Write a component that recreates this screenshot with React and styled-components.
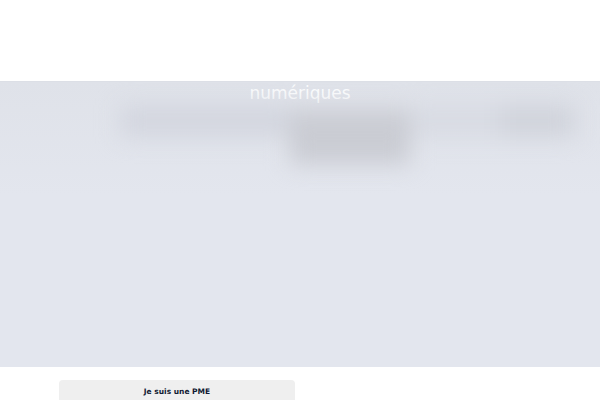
import styled, { createGlobalStyle } from "styled-components";

const Global = createGlobalStyle`
  body {
    margin: 0;
    background: #ffffff;
    font-family: "DejaVu Sans", "Noto Sans", sans-serif;
    overflow: hidden;
  }
`;

const App = () => {
    return (
        <Page>
            <Global />
            <Header />
            <Band>
                <Title>numériques</Title>
                <Blurred>
                    <Strip>
                        <Blob w={170} shade="#d3d6df" />
                        <Blob w={120} shade="#caccd3" tall />
                        <Blob w={90} shade="#d8dbe3" />
                        <Blob w={75} shade="#d0d3db" />
                    </Strip>
                </Blurred>
            </Band>
            <Cards>
                <Card>Je suis une PME</Card>
            </Cards>
        </Page>
    );
};

const Page = styled.div`
    width: 600px;
    height: 400px;
    overflow: hidden;
`;

const Header = styled.header`
    height: 81px;
    background: #ffffff;
`;

const Band = styled.section`
    height: 286px;
    background: #e3e6ee;
    border-top: 1px solid #dcdfe6;
    box-sizing: border-box;
    overflow: hidden;
    display: flex;
    flex-direction: column;
    align-items: center;
    background-image: linear-gradient(180deg, #dfe2e9 0%, #e3e6ee 40%);
`;

const Title = styled.h2`
    margin: 1px 0 0;
    font-family: "DejaVu Sans", sans-serif;
    font-weight: normal;
    font-size: 17px;
    line-height: 20px;
    color: #fbfcfd;
`;

const Blurred = styled.div`
    align-self: stretch;
    padding: 0 25px 0 120px;
    filter: blur(11px);
`;

const Strip = styled.div`
    display: flex;
    align-items: flex-start;
    height: 80px;
`;

const Blob = styled.div`
    width: ${(p) => p.w}px;
    height: ${(p) => (p.tall ? 55 : 32)}px;
    margin-top: ${(p) => (p.tall ? 6 : 2)}px;
    background: ${(p) => p.shade};
`;

const Cards = styled.div`
    padding: 13px 0 0 59px;
`;

const Card = styled.div`
    width: 236px;
    height: 40px;
    background: #efefef;
    border-radius: 4px;
    box-sizing: border-box;
    padding-top: 7px;
    text-align: center;
    font-family: "DejaVu Sans", sans-serif;
    font-weight: bold;
    font-size: 7.5px;
    color: #0f1a33;
`;

export default App;
